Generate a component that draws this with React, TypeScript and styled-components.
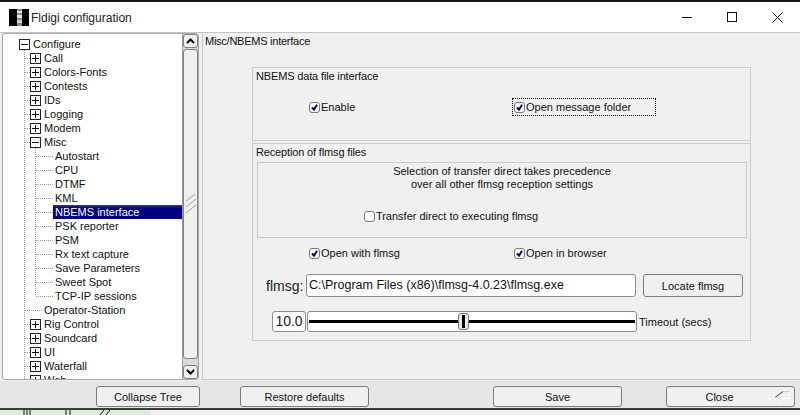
import React from "react";
import styled, { createGlobalStyle } from "styled-components";

const Global = createGlobalStyle`
  html, body { margin: 0; padding: 0; width: 800px; height: 415px; overflow: hidden; background: #f0f0f0; }
  #root { width: 800px; height: 415px; }
`;

const UI = `"Liberation Sans", Arial, sans-serif`;

const Window = styled.div`
  width: 800px;
  height: 415px;
  display: flex;
  flex-direction: column;
  overflow: hidden;
  background: #f0f0f0;
  font: 11px/14px ${UI};
  color: #111;
`;
const TopEdge = styled.div`
  height: 2px;
  flex: none;
  background: #1a1a1a;
`;
const TitleBar = styled.div`
  height: 30px;
  flex: none;
  background: #fff;
  border-bottom: 1px solid #c4c4c4;
  display: flex;
  align-items: center;
  padding-left: 9px;
  font-size: 12px;
  color: #222;
  box-sizing: content-box;
`;
const TitleText = styled.span`
  margin: 1px 0 0 2px;
  flex: 1;
`;
const Ctl = styled.div`
  width: 45px;
  height: 30px;
  display: flex;
  align-items: center;
  justify-content: center;
`;
const Main = styled.div`
  height: 348px;
  flex: none;
  display: flex;
  padding-left: 2px;
`;
const TreePane = styled.div`
  width: 197px;
  height: 347px;
  flex: none;
  display: flex;
  box-sizing: border-box;
  border: 1px solid #a8a8a8;
  border-radius: 3px;
  overflow: hidden;
  background: #fff;
`;
const Tree = styled.div`
  position: relative;
  flex: 1;
  padding-top: 3px;
  overflow: hidden;
`;
const TreeLines = styled.svg`
  position: absolute;
  left: 0;
  top: 0;
`;
const Row = styled.div<{ $depth: number }>`
  position: relative;
  height: 14px;
  display: flex;
  align-items: center;
  padding-left: ${(p) => 16 + p.$depth * 11}px;
`;
const Expander = styled.span`
  width: 11px;
  height: 11px;
  flex: none;
  box-sizing: border-box;
  border: 1px solid #222;
  background: #fff;
  margin-right: 3px;
  display: flex;
  align-items: center;
  justify-content: center;
`;
const NoExpander = styled.span`
  width: 14px;
  flex: none;
`;
const RowLabel = styled.span<{ $selected?: boolean }>`
  flex: ${(p) => (p.$selected ? 1 : "none")};
  margin-left: ${(p) => (p.$selected ? "-2px" : "0")};
  padding-left: ${(p) => (p.$selected ? "2px" : "0")};
  height: 14px;
  background: ${(p) => (p.$selected ? "linear-gradient(#3a3a90 0, #000080 3px)" : "transparent")};
  color: ${(p) => (p.$selected ? "#fff" : "#111")};
  white-space: nowrap;
`;
const ScrollBar = styled.div`
  width: 15px;
  flex: none;
  background: #d9d9d9;
  border-left: 1px solid #9a9a9a;
  display: flex;
  flex-direction: column;
  box-sizing: content-box;
`;
const ScrollBtn = styled.div`
  height: 14px;
  flex: none;
  box-sizing: border-box;
  background: #efefef;
  border: 1px solid #808080;
  border-radius: 3px;
  display: flex;
  align-items: center;
  justify-content: center;
`;
const ScrollThumb = styled.div`
  height: 310px;
  flex: none;
  box-sizing: border-box;
  margin-top: 1px;
  margin-bottom: 6px;
  background: #efefef;
  border: 1px solid #808080;
  border-radius: 3px;
  display: flex;
  align-items: center;
  justify-content: center;
`;
const Panel = styled.div`
  flex: 1;
  margin-left: 3px;
  height: 347px;
  box-sizing: border-box;
  border-left: 1px solid #c8c8c8;
  border-bottom: 1px solid #c8c8c8;
  padding: 1px 0 0 2px;
  display: flex;
  flex-direction: column;
`;
const PanelTitle = styled.div`
  height: 14px;
  letter-spacing: -0.25px;
`;
const Groups = styled.div`
  width: 499px;
  margin: 19px 0 0 47px;
  display: flex;
  flex-direction: column;
  gap: 2px;
`;
const Group = styled.div<{ $h: number }>`
  height: ${(p) => p.$h}px;
  box-sizing: border-box;
  border: 1px solid #cbcbcb;
  padding: 1px 3px;
  display: flex;
  flex-direction: column;
`;
const GroupTitle = styled.div`
  height: 14px;
  letter-spacing: -0.15px;
`;
const CheckRow = styled.div<{ $top: number }>`
  display: grid;
  grid-template-columns: 205px 1fr;
  margin: ${(p) => p.$top}px 0 0 52px;
  height: 18px;
  align-items: center;
`;
const Check = styled.label<{ $focus?: boolean }>`
  display: flex;
  align-items: center;
  height: 18px;
  width: ${(p) => (p.$focus ? "144px" : "auto")};
  margin-left: ${(p) => (p.$focus ? "-1px" : "0")};
  padding-left: ${(p) => (p.$focus ? "1px" : "0")};
  box-sizing: border-box;
  border: ${(p) => (p.$focus ? "1px dotted #111" : "1px solid transparent")};
`;
const CheckBox = styled.span`
  width: 11px;
  height: 11px;
  flex: none;
  box-sizing: border-box;
  border: 1px solid #7a7a7a;
  border-radius: 3px;
  background: #fbfbfb;
  margin-right: 1px;
  display: flex;
  align-items: center;
  justify-content: center;
`;
const InnerBox = styled.div`
  height: 76px;
  margin: 3px 0 0 1px;
  box-sizing: border-box;
  border: 1px solid #cbcbcb;
  display: flex;
  flex-direction: column;
  align-items: center;
  padding-top: 2px;
  text-align: center;
  line-height: 13px;
`;
const TransferRow = styled.div`
  margin: 16px 0 0 -102px;
`;
const FileRow = styled.div`
  display: flex;
  align-items: center;
  margin: 12px 0 0 10px;
  height: 23px;
`;
const FileLabel = styled.span`
  width: 40px;
  font-size: 14px;
  color: #222;
`;
const PathInput = styled.div`
  width: 330px;
  height: 23px;
  box-sizing: border-box;
  border: 1px solid #8c8c8c;
  border-radius: 3px;
  background: #fff;
  font-size: 12.5px;
  line-height: 21px;
  padding-left: 2px;
  white-space: nowrap;
  overflow: hidden;
`;
const Button = styled.div<{ $w: number; $left?: number; $inset?: number }>`
  width: ${(p) => p.$w}px;
  height: 21px;
  flex: none;
  margin-left: ${(p) => p.$left ?? 0}px;
  padding-right: ${(p) => p.$inset ?? 0}px;
  box-sizing: border-box;
  border: 1px solid #7c7c7c;
  border-radius: 3px;
  background: #f0f0f0;
  display: flex;
  align-items: center;
  justify-content: center;
  position: relative;
  color: #111;
`;
const LocateButton = styled(Button)`
  height: 23px;
`;
const SliderRow = styled.div`
  display: flex;
  align-items: center;
  margin: 14px 0 0 16px;
  height: 21px;
`;
const Counter = styled.div`
  width: 34px;
  height: 21px;
  box-sizing: border-box;
  border: 1px solid #8c8c8c;
  border-radius: 3px;
  background: #fff;
  font-size: 14px;
  line-height: 19px;
  text-align: center;
  color: #222;
`;
const Slider = styled.div`
  position: relative;
  width: 330px;
  height: 21px;
  margin: 0 2px 0 1px;
  box-sizing: border-box;
  border: 1px solid #8c8c8c;
  border-radius: 3px;
  background: #fff;
  display: flex;
  align-items: center;
  padding: 0 1px;
`;
const SliderLine = styled.div`
  flex: 1;
  height: 3px;
  background: #000;
`;
const Knob = styled.div`
  position: absolute;
  left: 150px;
  top: 1px;
  width: 11px;
  height: 17px;
  box-sizing: border-box;
  border: 1px solid #777;
  border-radius: 3px;
  background: #e8e8e8;
  display: flex;
  align-items: center;
  justify-content: center;
`;
const KnobBar = styled.span`
  width: 3px;
  height: 13px;
  background: #000;
`;
const BottomBar = styled.div`
  height: 27px;
  flex: none;
  background: #e6e6e6;
  display: flex;
  padding: 5px 0 0 96px;
  box-sizing: border-box;
`;
const ReturnMark = styled.svg`
  position: absolute;
  right: 3px;
  top: 3px;
`;
const Desktop = styled.div`
  flex: 1;
  display: flex;
  border-top: 2px solid #3c3c3c;
`;
const DesktopLeft = styled.svg`
  flex: none;
  background: #dcebdc;
`;
const DesktopRight = styled.div`
  flex: 1;
  background: #f0f0f0;
`;

const Plus = () => (
  <svg width="7" height="7" viewBox="0 0 7 7"><path d="M0 3.5h7M3.5 0v7" stroke="#111" strokeWidth="1" /></svg>
);
const Minus = () => (
  <svg width="7" height="7" viewBox="0 0 7 7"><path d="M0 3.5h7" stroke="#111" strokeWidth="1" /></svg>
);
const Tick = () => (
  <svg width="9" height="9" viewBox="0 0 9 9"><path d="M2 4.5l2 2.2L7 1.8" fill="none" stroke="#000080" strokeWidth="2" /></svg>
);

type Item = { label: string; depth: number; kind: "plus" | "minus" | "leaf"; selected?: boolean };
const items: Item[] = [
  { label: "Configure", depth: 0, kind: "minus" },
  ...["Call", "Colors-Fonts", "Contests", "IDs", "Logging", "Modem"].map((label) => ({ label, depth: 1, kind: "plus" as const })),
  { label: "Misc", depth: 1, kind: "minus" },
  ...["Autostart", "CPU", "DTMF", "KML"].map((label) => ({ label, depth: 2, kind: "leaf" as const })),
  { label: "NBEMS interface", depth: 2, kind: "leaf", selected: true },
  ...["PSK reporter", "PSM", "Rx text capture", "Save Parameters", "Sweet Spot", "TCP-IP sessions"].map((label) => ({ label, depth: 2, kind: "leaf" as const })),
  { label: "Operator-Station", depth: 1, kind: "leaf" },
  ...["Rig Control", "Soundcard", "UI", "Waterfall", "Web"].map((label) => ({ label, depth: 1, kind: "plus" as const })),
];

const dotted = { stroke: "#9a9a9a", strokeWidth: 1, strokeDasharray: "1 1" };

const Lines = () => (
  <TreeLines width="182" height="345" viewBox="0 0 182 345">
    <path d="M21.5 16V345" fill="none" {...dotted} />
    <path d="M32.5 114V262" fill="none" {...dotted} />
    {items.map((it, i) => {
      const y = 10.5 + i * 14;
      if (it.depth === 1) return <path key={i} d={`M22 ${y}H${it.kind === "leaf" ? 40 : 27}`} {...dotted} />;
      if (it.depth === 2) return <path key={i} d={`M33 ${y}H50`} {...dotted} />;
      return null;
    })}
  </TreeLines>
);

const Labeled = ({ label, on = true, focus }: { label: string; on?: boolean; focus?: boolean }) => (
  <Check $focus={focus}>
    <CheckBox>{on && <Tick />}</CheckBox>
    {label}
  </Check>
);

export default function App() {
  return (
    <Window>
      <Global />
      <TopEdge />
      <TitleBar>
        <svg width="20" height="17" viewBox="0 0 20 17">
          <rect width="20" height="17" fill="#000" />
          <rect x="8" y="0" width="5" height="17" fill="#8a8a8a" />
          <rect x="8" y="2" width="5" height="2" fill="#e8e8e8" />
          <rect x="8" y="6" width="5" height="3" fill="#e8e8e8" />
          <rect x="8" y="11" width="5" height="3" fill="#cfcfcf" />
        </svg>
        <TitleText>Fldigi configuration</TitleText>
        <Ctl>
          <svg width="11" height="11" viewBox="0 0 11 11"><path d="M0 5.5h10" stroke="#111" /></svg>
        </Ctl>
        <Ctl>
          <svg width="11" height="11" viewBox="0 0 11 11"><rect x="0.5" y="0.5" width="9" height="9" fill="none" stroke="#111" /></svg>
        </Ctl>
        <Ctl>
          <svg width="11" height="11" viewBox="0 0 11 11"><path d="M0.5 0.5l10 10M10.5 0.5l-10 10" stroke="#111" /></svg>
        </Ctl>
      </TitleBar>
      <Main>
        <TreePane>
          <Tree>
            <Lines />
            {items.map((it) => (
              <Row key={it.label} $depth={it.depth}>
                {it.kind === "leaf" ? (
                  <NoExpander />
                ) : (
                  <Expander>{it.kind === "plus" ? <Plus /> : <Minus />}</Expander>
                )}
                <RowLabel $selected={it.selected}>{it.label}</RowLabel>
              </Row>
            ))}
          </Tree>
          <ScrollBar>
            <ScrollBtn>
              <svg width="9" height="6" viewBox="0 0 9 6"><path d="M1 5l3.5-3.5L8 5" fill="none" stroke="#000" strokeWidth="2" /></svg>
            </ScrollBtn>
            <ScrollThumb>
              <svg width="12" height="20" viewBox="0 0 12 20">
                <path d="M1 7l9-7M1 13l10-8M1 19l10-8" fill="none" stroke="#a0a0a0" strokeWidth="1" />
              </svg>
            </ScrollThumb>
            <ScrollBtn>
              <svg width="9" height="6" viewBox="0 0 9 6"><path d="M1 1l3.5 3.5L8 1" fill="none" stroke="#000" strokeWidth="2" /></svg>
            </ScrollBtn>
          </ScrollBar>
        </TreePane>
        <Panel>
          <PanelTitle>Misc/NBEMS interface</PanelTitle>
          <Groups>
            <Group $h={74}>
              <GroupTitle>NBEMS data file interface</GroupTitle>
              <CheckRow $top={15}>
                <Labeled label="Enable" />
                <Labeled label="Open message folder" focus />
              </CheckRow>
            </Group>
            <Group $h={198}>
              <GroupTitle>Reception of flmsg files</GroupTitle>
              <InnerBox>
                <div>Selection of transfer direct takes precedence</div>
                <div>over all other flmsg reception settings</div>
                <TransferRow>
                  <Labeled label="Transfer direct to executing flmsg" on={false} />
                </TransferRow>
              </InnerBox>
              <CheckRow $top={6}>
                <Labeled label="Open with flmsg" />
                <Labeled label="Open in browser" />
              </CheckRow>
              <FileRow>
                <FileLabel>flmsg:</FileLabel>
                <PathInput>C:\Program Files (x86)\flmsg-4.0.23\flmsg.exe</PathInput>
                <LocateButton $w={100} $left={7}>Locate flmsg</LocateButton>
              </FileRow>
              <SliderRow>
                <Counter>10.0</Counter>
                <Slider>
                  <SliderLine />
                  <Knob><KnobBar /></Knob>
                </Slider>
                Timeout (secs)
              </SliderRow>
            </Group>
          </Groups>
        </Panel>
      </Main>
      <BottomBar>
        <Button $w={104}>Collapse Tree</Button>
        <Button $w={129} $left={40}>Restore defaults</Button>
        <Button $w={129} $left={124}>Save</Button>
        <Button $w={129} $left={44} $inset={22}>
          Close
          <ReturnMark width="17" height="14" viewBox="0 0 17 14">
            <path d="M15.5 1.5v7H6" fill="none" stroke="#fff" strokeWidth="1.2" />
            <path d="M9 1.5h6.5" fill="none" stroke="#c8c8c8" />
            <path d="M9 1.5L1 7.5" fill="none" stroke="#333" />
            <path d="M1 7.5l6 5h0" fill="none" stroke="#fff" />
          </ReturnMark>
        </Button>
      </BottomBar>
      <Desktop>
        <DesktopLeft width="150" height="5" viewBox="0 0 150 5">
          <path d="M24 0v5M27 0v5M30 0v5M66 0v5M70 0v5M100 5l4-5M106 5l4-5" stroke="#111" strokeWidth="1" />
        </DesktopLeft>
        <DesktopRight />
      </Desktop>
    </Window>
  );
}
